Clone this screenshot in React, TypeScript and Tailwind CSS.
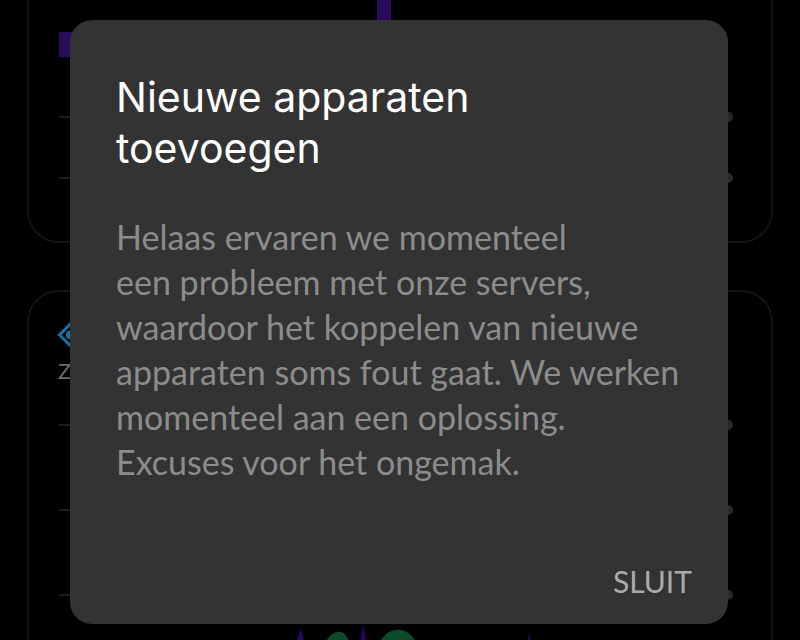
import React from 'react';

function Dot() {
  return <span className="block w-[10px] h-[10px] rounded-full bg-[#2a2a2a]" />;
}

function GridRow() {
  return (
    <div className="flex items-center justify-between h-[2px]">
      <span className="block w-[14px] h-[2px] bg-[#1e1e1e]" />
      <Dot />
    </div>
  );
}

export default function App() {
  return (
    <div className="relative w-[800px] h-[640px] overflow-hidden bg-black" style={{ fontFamily: 'Lato, "Liberation Sans", sans-serif' }}>
      {/* dimmed screen behind the dialog */}
      <div className="flex flex-col gap-[47px] px-[27px] -mt-[120px]">
        <div className="relative h-[363px] rounded-[32px] border-2 border-[#141414]">
          <div className="absolute left-[30px] top-[150px] w-[13px] h-[25px] bg-[#2a0b5c]" />
          <div className="absolute left-[348px] top-[100px] w-[14px] h-[40px] bg-[#2a0b5c]" />
          <div className="absolute left-[497px] top-[148px] w-[4px] h-[12px] rotate-[20deg] bg-[#3a1080]" />
          <div className="flex flex-col gap-[59px] pl-[30px] pr-[38px] pt-[234px]">
            <GridRow />
            <GridRow />
          </div>
        </div>
        <div className="relative h-[400px] rounded-[32px] border-2 border-[#141414]">
          <div className="flex flex-col items-start pl-[26px] pt-[30px]">
            <svg width="30" height="28" viewBox="0 0 24 24" fill="none" stroke="#1b6f9e" strokeWidth="2.6">
              <path d="M12 2 L21 11 L12 20 L3 11 Z" />
              <circle cx="12" cy="11" r="2.4" fill="#1b6f9e" />
            </svg>
            <span className="mt-[10px] ml-[3px] text-[22px] leading-none text-[#6b6b6b]">Z</span>
          </div>
          <div className="flex flex-col gap-[83px] pl-[30px] pr-[38px] pt-[42px]">
            <GridRow />
            <GridRow />
            <GridRow />
          </div>
          <svg className="absolute left-[250px] top-[330px]" width="280" height="40" viewBox="0 0 280 40">
            <path d="M10 40 L22 6 L30 40 Z" fill="#22085a" />
            <path d="M40 40 C44 20 52 8 62 10 C70 12 72 26 76 40 Z" fill="#0d4a2a" />
            <path d="M78 40 L84 2 L92 40 Z" fill="#22085a" />
            <path d="M94 40 C98 18 108 6 122 8 C134 10 140 24 146 40 Z" fill="#0d4a2a" />
            <path d="M148 40 L154 16 L160 40 Z" fill="#22085a" />
            <path d="M246 40 L250 10 L254 40 Z" fill="#22085a" />
          </svg>
        </div>
      </div>

      {/* dialog */}
      <div className="absolute left-[70px] top-[20px] w-[658px] h-[604px] rounded-[22px] bg-[#333333] flex flex-col pl-[46px] pr-[30px]">
        <h1 className="mt-[52px] text-[41px] leading-[51px] text-white" style={{ fontFamily: 'Inter, "Open Sans", sans-serif' }}>
          Nieuwe apparaten
          <br />
          toevoegen
        </h1>
        <p className="mt-[40px] text-[34px] leading-[45px] text-[#8c8c8c]">
          Helaas ervaren we momenteel
          <br />
          een probleem met onze servers,
          <br />
          waardoor het koppelen van nieuwe
          <br />
          apparaten soms fout gaat. We werken
          <br />
          momenteel aan een oplossing.
          <br />
          Excuses voor het ongemak.
        </p>
        <div className="mt-auto mb-[28px] pr-[6px] flex justify-end">
          <button className="text-[30px] leading-none text-[#ababab]">SLUIT</button>
        </div>
      </div>
    </div>
  );
}
